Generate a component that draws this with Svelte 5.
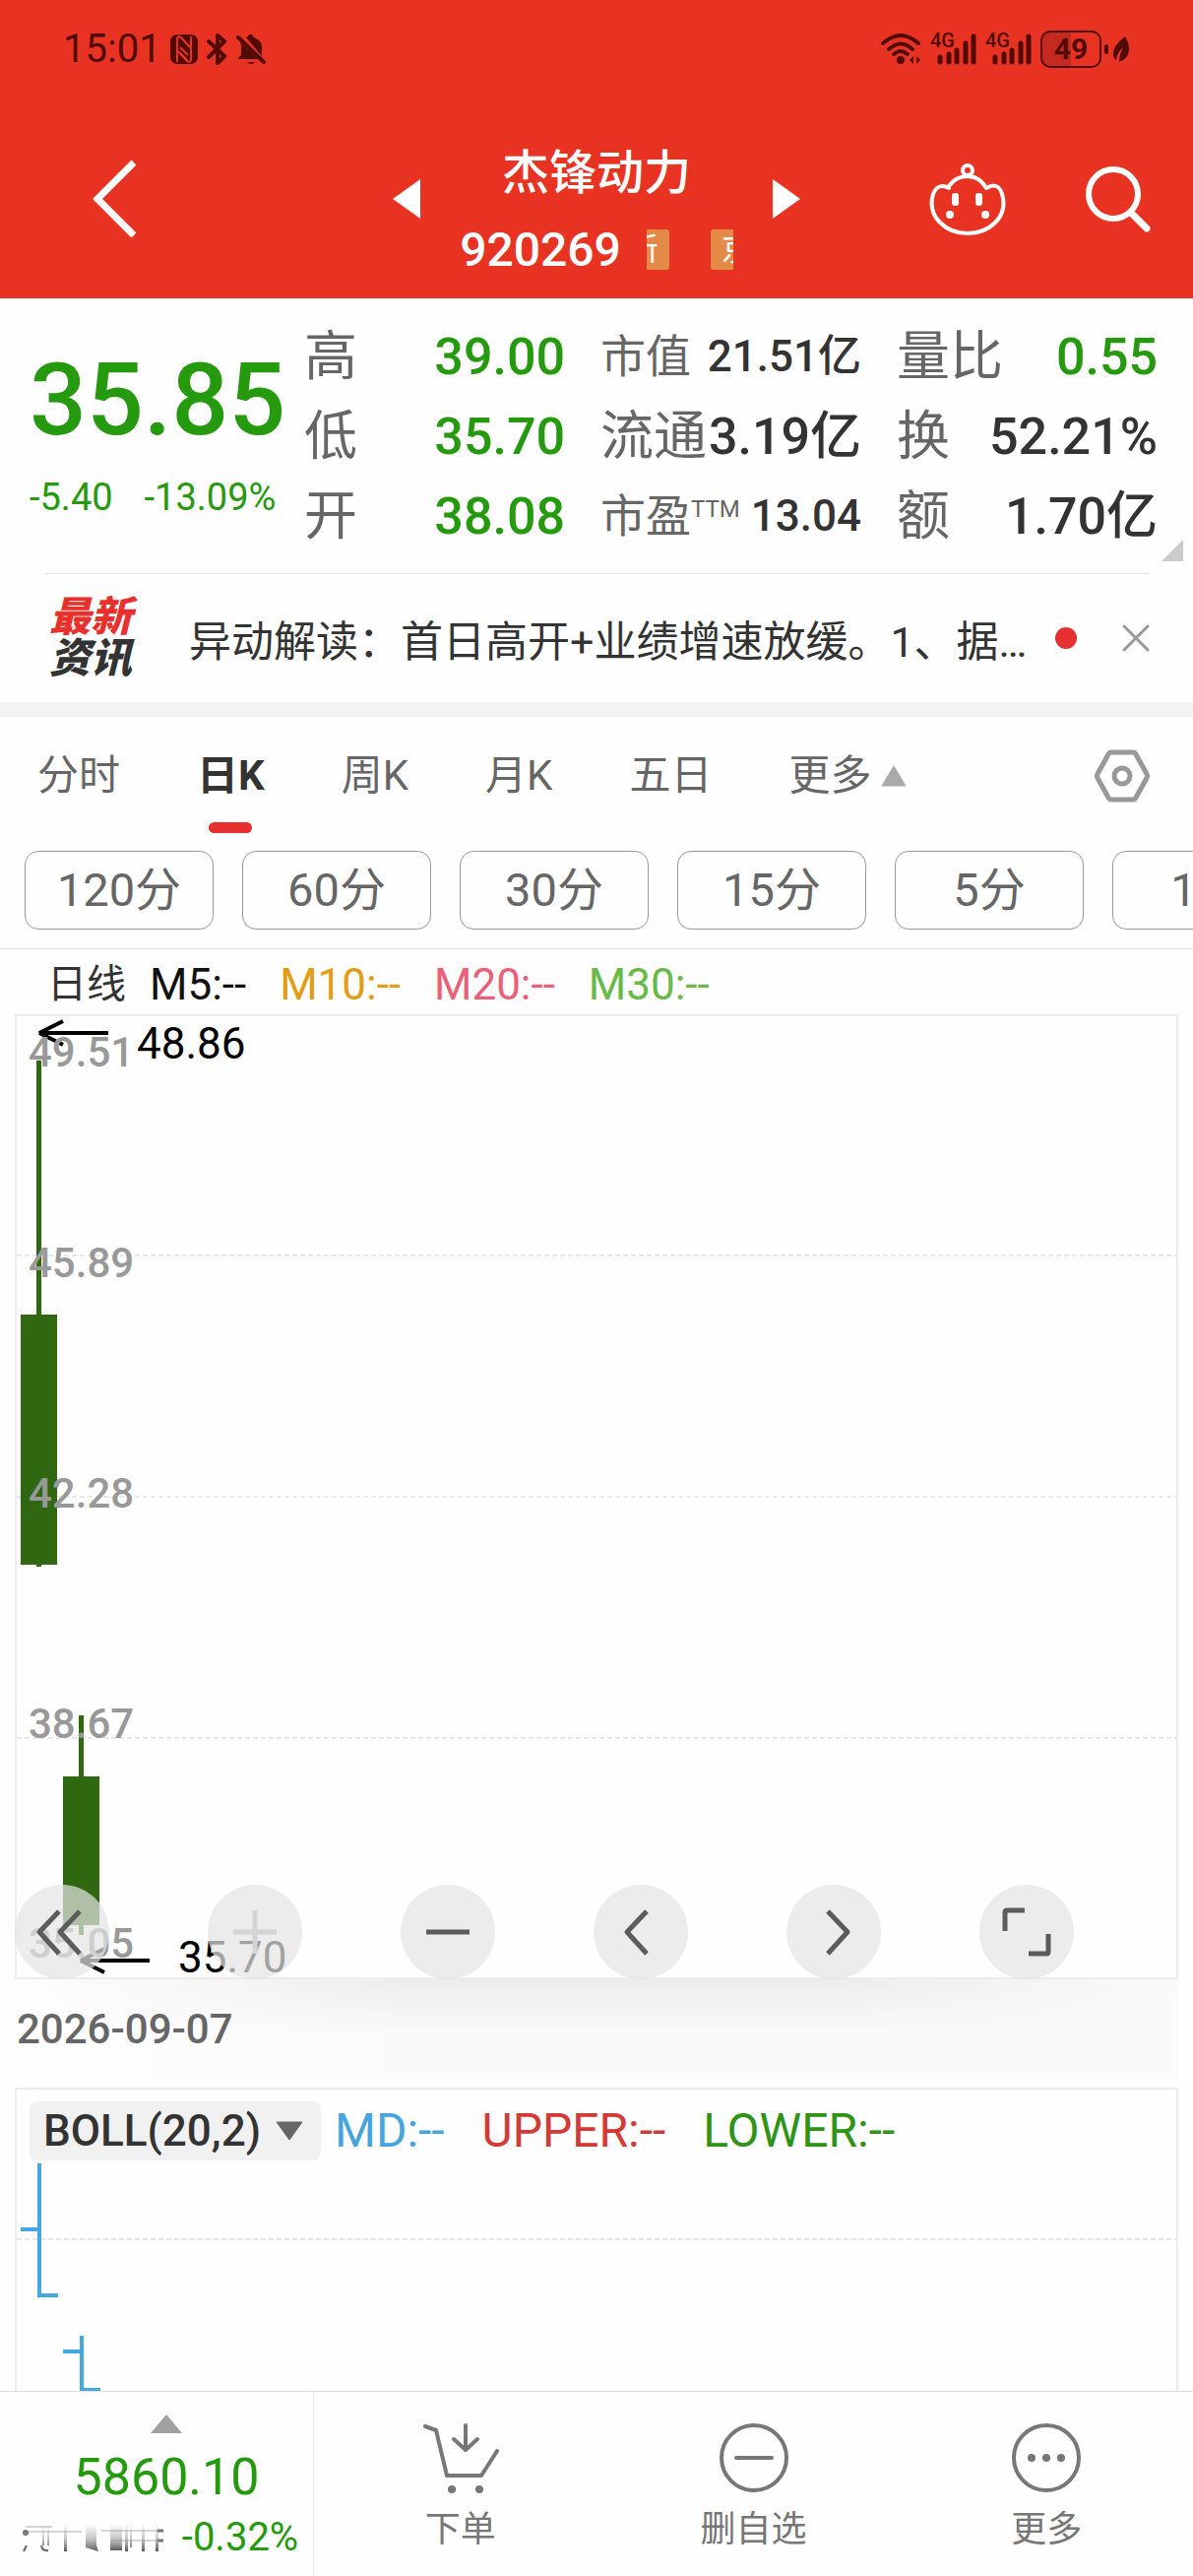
<script lang="ts">
	type Cell = { label: string; sup?: string; value: string; down?: boolean; small?: boolean };

	const columns: Cell[][] = [
		[
			{ label: '高', value: '39.00', down: true },
			{ label: '低', value: '35.70', down: true },
			{ label: '开', value: '38.08', down: true }
		],
		[
			{ label: '市值', value: '21.51亿', small: true },
			{ label: '流通', value: '3.19亿' },
			{ label: '市盈', sup: 'TTM', value: '13.04', small: true }
		],
		[
			{ label: '量比', value: '0.55', down: true },
			{ label: '换', value: '52.21%' },
			{ label: '额', value: '1.70亿' }
		]
	];

	const tabs = ['分时', '日K', '周K', '月K', '五日'];
	const periods = ['120分', '60分', '30分', '15分', '5分', '1分'];
	let active = $state('日K');

	const averages = [
		{ text: 'M5:--', color: '#111' },
		{ text: 'M10:--', color: '#e29d14' },
		{ text: 'M20:--', color: '#ea6079' },
		{ text: 'M30:--', color: '#67ba45' }
	];

	const gridLines = [243, 488, 733];
	const scale = [
		{ text: '49.51', y: 51 },
		{ text: '45.89', y: 265 },
		{ text: '42.28', y: 499 },
		{ text: '38.67', y: 733 },
		{ text: '35.05', y: 956 }
	];
	const candles = [
		{ x: 4, high: 45, open: 303, close: 557, low: 559 },
		{ x: 47, high: 710, open: 772, close: 923, low: 933 }
	];
	const marks = [
		{ text: '48.86', x: 23, y: 17, textX: 122, textY: 43 },
		{ text: '35.70', x: 65, y: 959, textX: 164, textY: 971 }
	];

	const tools = [
		{ name: '最早', d: 'M45 27 25 48 45 70M66 27 46 48 66 70' },
		{ name: '放大', d: 'M48 26V70M26 48H70', off: true },
		{ name: '缩小', d: 'M26 48H70' },
		{ name: '向左', d: 'M54 27 34 48 54 70' },
		{ name: '向右', d: 'M42 27 62 48 42 70' },
		{ name: '全屏', d: 'M26 47V28Q26 26 28 26H46M50 70H68Q70 70 70 68V50' }
	];

	const bolls = [
		{ text: 'MD:--', color: '#46a5dd' },
		{ text: 'UPPER:--', color: '#d33a36' },
		{ text: 'LOWER:--', color: '#2f9416' }
	];
</script>

<div class="screen">
	<header>
		<div class="status">
			<div class="status-left">
				<span class="time">15:01</span>
				<svg width="30" height="32" viewBox="0 0 30 32" aria-hidden="true">
					<rect x="1" y="1" width="28" height="30" rx="7" fill="#520a06" />
					<path d="M8 29V5q1-3 4-1l9 10M22 3v24q-1 3-4 1L9 18" fill="none" stroke="#e83323" stroke-width="2" />
					<path d="M11 14l8 8M11 20l7 7" stroke="#e83323" stroke-width="2" />
				</svg>
				<svg width="22" height="34" viewBox="0 0 22 34" aria-hidden="true">
					<path d="M2 9 18 24 11 31V3L18 9 2 25" fill="none" stroke="#520a06" stroke-width="4" stroke-linejoin="round" stroke-linecap="round" />
				</svg>
				<svg width="30" height="34" viewBox="0 0 30 34" aria-hidden="true">
					<path d="M10 5q2 0 3-3h3q1 3 4 4 6 3 6 9v9ZM4 10 22 27H2q0-2 3-4V13ZM11 30h8q-4 4-8 0Z" fill="#520a06" />
					<path d="M2 5 28 30" stroke="#520a06" stroke-width="4" stroke-linecap="round" />
				</svg>
			</div>
			<div class="status-right">
				<svg width="42" height="34" viewBox="0 0 42 34" aria-hidden="true">
					<g fill="none" stroke="#520a06" stroke-width="4" stroke-linecap="round">
						<path d="M2 11Q20-5 38 11" />
						<path d="M8 17Q20 6 32 17" />
						<path d="M13 22Q20 16 27 22" />
					</g>
					<circle cx="20" cy="28" r="4" fill="#520a06" />
					<path d="M33 24v8l-4-4zM36 24v8l4-4z" fill="#520a06" />
				</svg>
				{#each [1, 2] as sim (sim)}
					<span class="signal">
						<span class="net">4G</span>
						<svg width="48" height="34" viewBox="0 0 48 34" aria-hidden="true">
							<g stroke="#520a06" stroke-width="5" stroke-linecap="round">
								<path d="M10 25V30M19 22V30M27 18V30M36 11V30M44 4V30" />
							</g>
						</svg>
					</span>
				{/each}
				<span class="battery">49</span>
				<span class="cap"></span>
				<svg class="leaf" width="18" height="28" viewBox="0 0 18 28" aria-hidden="true">
					<path d="M13 1Q1 10 1 18q0 6 3 7 1-8 7-13-4 7-4 15 10-4 10-13Q17 8 13 1Z" fill="#520a06" />
				</svg>
			</div>
		</div>

		<nav class="titlebar">
			<button class="icon back" aria-label="返回">
				<svg width="46" height="80" viewBox="0 0 46 80">
					<path d="M42 3 5 40 42 77" fill="none" stroke="#fff" stroke-width="7" />
				</svg>
			</button>
			<div class="switcher">
				<button class="icon" aria-label="上一只">
					<svg width="28" height="40" viewBox="0 0 28 40"><path d="M28 0V40L0 20Z" fill="#fff" /></svg>
				</button>
				<div class="stock">
					<h1>杰锋动力</h1>
					<div class="code">
						<span>920269</span>
						<span class="badges"><i>新</i><i>京</i></span>
					</div>
				</div>
				<button class="icon" aria-label="下一只">
					<svg width="28" height="40" viewBox="0 0 28 40"><path d="M0 0V40L28 20Z" fill="#fff" /></svg>
				</button>
			</div>
			<div class="actions">
				<button class="icon" aria-label="智能助手">
					<svg width="78" height="74" viewBox="0 0 78 74">
						<g fill="none" stroke="#fff" stroke-width="4">
							<circle cx="39" cy="8" r="5" />
							<path d="M20 24Q27 14 39 14T58 26Q70 19 74 32 79 49 67 61 56 72 39 72T11 61Q-1 49 4 32 9 20 20 26Z" stroke-linejoin="round" />
						</g>
						<rect x="23" y="31" width="7" height="13" rx="3" fill="#fff" />
						<rect x="47" y="31" width="7" height="13" rx="3" fill="#fff" />
						<circle cx="21" cy="53" r="4" fill="#fff" />
						<circle cx="57" cy="53" r="4" fill="#fff" />
					</svg>
				</button>
				<button class="icon" aria-label="搜索">
					<svg width="68" height="68" viewBox="0 0 68 68">
						<circle cx="29" cy="29" r="25" fill="none" stroke="#fff" stroke-width="6" />
						<path d="M47 48 63 64" stroke="#fff" stroke-width="7" stroke-linecap="round" />
					</svg>
				</button>
			</div>
		</nav>
	</header>

	<section class="quote">
		<div class="price">
			<strong>35.85</strong>
			<div class="change"><span>-5.40</span><span>-13.09%</span></div>
		</div>
		<div class="stats">
			{#each columns as column}
				<dl>
					{#each column as cell}
						<div class="stat" class:small={cell.small}>
							<dt>{cell.label}{#if cell.sup}<sup>{cell.sup}</sup>{/if}</dt>
							<dd class:down={cell.down}>{cell.value}</dd>
						</div>
					{/each}
				</dl>
			{/each}
		</div>
		<svg class="corner" width="22" height="22" viewBox="0 0 22 22" aria-hidden="true">
			<path d="M22 0V22H0Z" fill="#ccc" />
		</svg>
	</section>

	<section class="news">
		<div class="news-logo"><span>最新</span><span>资讯</span></div>
		<a href="#news">异动解读：首日高开+业绩增速放缓。1、据…</a>
		<span class="dot"></span>
		<button class="icon close" aria-label="关闭">
			<svg width="28" height="28" viewBox="0 0 28 28">
				<path d="M2 2 26 26M26 2 2 26" stroke="#999" stroke-width="3" stroke-linecap="round" />
			</svg>
		</button>
	</section>

	<div class="tabs">
		{#each tabs as tab}
			<button class="tab" class:active={tab === active} onclick={() => (active = tab)}>{tab}</button>
		{/each}
		<button class="tab more">
			更多
			<svg width="26" height="22" viewBox="0 0 26 22" aria-hidden="true"><path d="M13 1 25 21H1Z" fill="#aaa" stroke="#aaa" stroke-linejoin="round" /></svg>
		</button>
		<button class="icon settings" aria-label="设置">
			<svg width="56" height="54" viewBox="0 0 56 54">
				<path d="M17 3H39Q41 3 42 5L53 25Q54 27 53 29L42 49Q41 51 39 51H17Q15 51 14 49L3 29Q2 27 3 25L14 5Q15 3 17 3Z" fill="none" stroke="#999" stroke-width="5" />
				<circle cx="28" cy="27" r="8" fill="none" stroke="#999" stroke-width="5" />
			</svg>
		</button>
	</div>

	<div class="periods">
		{#each periods as period}
			<button>{period}</button>
		{/each}
	</div>

	<div class="legend">
		<span class="kind">日线</span>
		{#each averages as avg}
			<span style:color={avg.color}>{avg.text}</span>
		{/each}
	</div>

	<section class="chart">
		<svg width="100%" height="100%" role="img" aria-label="日K线">
			{#each gridLines as y}
				<line x1="0" x2="100%" y1={y} y2={y} stroke="#e8e8e8" stroke-width="2" stroke-dasharray="5 3" />
			{/each}
			{#each candles as c}
				<rect x={c.x + 16} y={c.high} width="5" height={c.low - c.high} fill="#2f6811" />
				<rect x={c.x} y={c.open} width="37" height={c.close - c.open} fill="#2f6811" />
			{/each}
			{#each marks as m}
				<path d="M{m.x + 70} {m.y}H{m.x}L{m.x + 24} {m.y - 12}M{m.x} {m.y}L{m.x + 24} {m.y + 12}" fill="none" stroke="#000" stroke-width="4" />
				<text class="mark" x={m.textX} y={m.textY}>{m.text}</text>
			{/each}
			{#each scale as s}
				<text class="scale" x="12" y={s.y}>{s.text}</text>
			{/each}
		</svg>
		<div class="tools">
			{#each tools as tool}
				<button class:off={tool.off} aria-label={tool.name}>
					<svg width="96" height="96" viewBox="0 0 96 96">
						<path d={tool.d} fill="none" stroke="currentColor" stroke-width="5" stroke-linejoin="round" />
					</svg>
				</button>
			{/each}
		</div>
	</section>

	<div class="date">2026-09-07</div>

	<section class="boll">
		<svg class="boll-lines" width="100%" height="100%" aria-hidden="true">
			<line x1="0" x2="100%" y1="152" y2="152" stroke="#e8e8e8" stroke-width="2" stroke-dasharray="5 3" />
			<path d="M4 142H23M23 75V209H42M47 266H66M66 250V305H85" fill="none" stroke="#46a8e0" stroke-width="4" />
		</svg>
		<div class="boll-head">
			<label class="picker">
				<select aria-label="指标">
					<option>BOLL(20,2)</option>
				</select>
				<svg width="28" height="20" viewBox="0 0 28 20" aria-hidden="true"><path d="M1 1H27L14 19Z" fill="#666" stroke="#666" stroke-linejoin="round" /></svg>
			</label>
			{#each bolls as b}
				<span style:color={b.color}>{b.text}</span>
			{/each}
		</div>
	</section>

	<footer>
		<button class="index">
			<svg width="32" height="19" viewBox="0 0 32 19" aria-hidden="true"><path d="M16 0 32 19H0Z" fill="#a0a0a0" /></svg>
			<b>5860.10</b>
			<span class="index-row">
				<!-- index name caught halfway through its flip -->
				<svg width="144" height="32" viewBox="0 0 144 32" aria-hidden="true">
					<defs>
						<linearGradient id="fade" x1="0" y1="0" x2="0" y2="1">
							<stop offset="0" stop-color="#999" stop-opacity="0" />
							<stop offset="0.55" stop-color="#888" stop-opacity="0.5" />
							<stop offset="1" stop-color="#555" />
						</linearGradient>
					</defs>
					<path d="M20 2h2v22h-2zM25 2h2v22h-2zM42 2h3v28h-3zM64 2h11v22l2 6-13-4zM89 2h12v26H89zM104 2h3v28h-3zM109 2h2v24h-2zM121 2h3v28h-3zM135 2h3v28h-3z" fill="url(#fade)" />
					<path d="M1 30 4 24M19 24q1 6 7 5M89 28h12" fill="none" stroke="#666" stroke-width="2" />
					<path d="M3 5H30M2 10H60M80 9H142M90 19H142" stroke="#999" stroke-width="2" opacity="0.4" />
					<circle cx="3" cy="11" r="3" fill="#777" />
					<path d="M137 9H143M137 19H143" stroke="#777" stroke-width="3" />
				</svg>
				<span>-0.32%</span>
			</span>
		</button>
		<button class="action">
			<svg width="78" height="72" viewBox="0 0 78 72" aria-hidden="true">
				<path d="M3 4 14 8 25 54H60L76 29M44 3V27M32 17 44 28 56 17" fill="none" stroke="#777" stroke-width="4" stroke-linecap="round" stroke-linejoin="round" />
				<circle cx="30" cy="68" r="4" fill="#777" />
				<circle cx="58" cy="68" r="4" fill="#777" />
			</svg>
			下单
		</button>
		<button class="action">
			<svg width="72" height="72" viewBox="0 0 72 72" aria-hidden="true">
				<circle cx="36" cy="36" r="33" fill="none" stroke="#777" stroke-width="4" />
				<path d="M18 36H54" stroke="#777" stroke-width="4" stroke-linecap="round" />
			</svg>
			删自选
		</button>
		<button class="action">
			<svg width="72" height="72" viewBox="0 0 72 72" aria-hidden="true">
				<circle cx="36" cy="36" r="33" fill="none" stroke="#777" stroke-width="4" />
				<g fill="#777">
					<circle cx="21" cy="36" r="4" />
					<circle cx="36" cy="36" r="4" />
					<circle cx="51" cy="36" r="4" />
				</g>
			</svg>
			更多
		</button>
	</footer>
</div>

<style>
	:global(body) {
		background: #fefefe;
	}
	.screen {
		display: flex;
		flex-direction: column;
		min-height: 100vh;
		overflow: hidden;
		background: #fefefe;
		color: #333;
		font-family: Roboto, 'Noto Sans CJK SC', sans-serif;
	}
	button {
		margin: 0;
		padding: 0;
		border: 0;
		background: none;
		color: inherit;
		font: inherit;
		cursor: pointer;
	}
	svg {
		display: block;
		flex: none;
	}
	.icon {
		display: block;
	}

	header {
		background: #e83323;
		color: #fff;
	}
	.status {
		display: flex;
		justify-content: space-between;
		align-items: center;
		height: 100px;
		padding: 0 64px;
		color: #520a06;
	}
	.status-left,
	.status-right {
		display: flex;
		align-items: center;
	}
	.status-left {
		gap: 8px;
	}
	.time {
		font-size: 40px;
		line-height: 48px;
	}
	.status-right {
		gap: 8px;
	}
	.signal {
		position: relative;
	}
	.net {
		position: absolute;
		top: 0;
		left: 0;
		font-size: 20px;
		font-weight: 500;
		line-height: 16px;
	}
	.battery {
		box-sizing: border-box;
		width: 62px;
		border: 2px solid #520a06;
		border-radius: 10px;
		background: linear-gradient(90deg, #c42a1d 50%, transparent 50%);
		font-size: 30px;
		font-weight: 700;
		line-height: 34px;
		text-align: center;
	}
	.cap {
		width: 4px;
		height: 10px;
		margin-left: -5px;
		border-radius: 2px;
		background: #520a06;
	}
	.leaf {
		margin-left: -4px;
	}

	.titlebar {
		display: grid;
		grid-template-columns: 1fr 414px 1fr;
		align-items: center;
		height: 203px;
	}
	.back {
		justify-self: start;
		padding-left: 94px;
	}
	.switcher {
		display: flex;
		justify-content: space-between;
		align-items: center;
	}
	.stock {
		display: flex;
		flex-direction: column;
		align-items: center;
		padding-top: 26px;
	}
	h1 {
		margin: 0;
		font-size: 48px;
		font-weight: 500;
		line-height: 78px;
	}
	.code {
		display: flex;
		align-items: center;
		gap: 26px;
		font-size: 48px;
		font-weight: 500;
		line-height: 78px;
	}
	.badges {
		display: flex;
		justify-content: center;
		gap: 42px;
		width: 88px;
		overflow: hidden;
	}
	.badges i {
		flex: none;
		padding: 0 11px;
		border-radius: 3px;
		background: #e38b46;
		font-size: 32px;
		font-style: normal;
		font-weight: 400;
		line-height: 41px;
	}
	.actions {
		display: flex;
		justify-content: flex-end;
		align-items: center;
		gap: 80px;
		padding-right: 42px;
	}

	.quote {
		position: relative;
		display: flex;
		padding: 19px 36px 17px 30px;
	}
	.price {
		flex: 0 0 279px;
		color: #259a0f;
	}
	.price strong {
		display: block;
		font-size: 102px;
		font-weight: 500;
		line-height: 168px;
	}
	.change {
		display: flex;
		gap: 32px;
		font-size: 38px;
		line-height: 30px;
	}
	.stats {
		flex: 1;
		display: grid;
		grid-template-columns: repeat(3, 1fr);
		gap: 36px;
	}
	dl,
	dd {
		margin: 0;
	}
	.stat {
		display: flex;
		justify-content: space-between;
		font-size: 54px;
		line-height: 81px;
		white-space: nowrap;
	}
	.stat.small {
		font-size: 46px;
	}
	dt {
		display: flex;
		color: #666;
	}
	sup {
		font-size: 24px;
		line-height: 66px;
	}
	dd {
		font-size: 52px;
		font-weight: 500;
	}
	.small dd {
		font-size: 44px;
	}
	.down {
		color: #259a0f;
	}
	.corner {
		position: absolute;
		right: 10px;
		bottom: 12px;
	}

	.news {
		position: relative;
		display: flex;
		align-items: center;
		height: 131px;
		padding: 0 44px 0 50px;
		border-bottom: 15px solid #f3f3f3;
	}
	.news::before {
		content: '';
		position: absolute;
		top: 0;
		left: 46px;
		right: 44px;
		height: 1px;
		background: #e6e6e6;
	}
	.news-logo {
		display: flex;
		flex-direction: column;
		margin-right: 58px;
		font-size: 42px;
		font-style: italic;
		font-weight: 900;
		line-height: 42px;
	}
	.news-logo span:first-child {
		color: #e8302c;
	}
	.news a {
		flex: 1;
		color: #333;
		font-size: 43px;
		text-decoration: none;
		white-space: nowrap;
	}
	.dot {
		width: 22px;
		height: 22px;
		border-radius: 50%;
		background: #e62f2f;
	}
	.close {
		margin-left: 46px;
	}

	.tabs {
		display: flex;
		gap: 78px;
		padding: 0 44px 0 38px;
	}
	.tab {
		position: relative;
		color: #666;
		font-size: 42px;
		line-height: 120px;
	}
	.tab.active {
		color: #333;
		font-weight: 700;
	}
	.tab.active::after {
		content: '';
		position: absolute;
		bottom: 2px;
		left: calc(50% - 22px);
		width: 44px;
		height: 11px;
		border-radius: 6px;
		background: #e62f2f;
	}
	.more {
		display: flex;
		align-items: center;
		gap: 10px;
	}
	.settings {
		margin-left: auto;
	}

	.periods {
		display: flex;
		gap: 29px;
		padding: 16px 0 19px 25px;
		overflow: hidden;
		border-bottom: 1px solid #e0e0e0;
	}
	.periods button {
		box-sizing: border-box;
		flex: 0 0 192px;
		border: 1px solid #999;
		border-radius: 14px;
		color: #666;
		font-size: 47px;
		line-height: 78px;
	}

	.legend {
		display: flex;
		gap: 34px;
		padding: 6px 0 0 48px;
		font-size: 44px;
		line-height: 60px;
	}
	.kind {
		margin-right: -10px;
		font-size: 40px;
	}

	.chart {
		position: relative;
		box-sizing: border-box;
		height: 980px;
		margin: 0 15px;
		border: 2px solid #ececec;
	}
	.chart text {
		font-size: 44px;
	}
	.chart .scale {
		fill: #999;
		font-size: 42px;
		font-weight: 500;
	}
	.tools {
		position: absolute;
		bottom: -2px;
		left: -2px;
		display: flex;
		gap: 100px;
	}
	.tools button {
		border-radius: 50%;
		background: rgba(228, 228, 228, 0.71);
		color: #5c5c5c;
	}
	.tools .off {
		color: #d4d4d4;
	}

	.date {
		margin: 0 15px 8px;
		padding-left: 2px;
		background:
			linear-gradient(90deg, #fefefe, rgba(254, 254, 254, 0) 35%, rgba(250, 250, 250, 0) 70%, #fafafa),
			linear-gradient(#ececec, #fafafa 55%);
		color: #666;
		font-size: 42px;
		font-weight: 500;
		line-height: 102px;
	}

	.boll {
		position: relative;
		flex: 1;
		min-height: 304px;
		margin: 0 15px;
		overflow: hidden;
		border: solid #ececec;
		border-width: 2px 2px 0;
	}
	.boll-lines {
		position: absolute;
		inset: 0;
	}
	.boll-head {
		position: relative;
		display: flex;
		gap: 38px;
		padding: 12px 13px;
		font-size: 48px;
		line-height: 60px;
	}
	.picker {
		display: flex;
		align-items: center;
		gap: 14px;
		margin-right: -24px;
		padding: 0 18px 0 14px;
		border-radius: 8px;
		background: #f1f1f1;
		font-size: 44px;
	}
	select {
		appearance: none;
		height: 60px;
		padding: 0;
		border: 0;
		background: none;
		color: #333;
		font: inherit;
		font-weight: 500;
	}

	footer {
		display: flex;
		height: 187px;
		border-top: 1px solid #e0e0e0;
		background: #fefefe;
	}
	.index {
		box-sizing: border-box;
		display: flex;
		flex-direction: column;
		align-items: center;
		width: 319px;
		padding: 23px 0 0 20px;
		border-right: 1px solid #eee;
		color: #259a0f;
	}
	.index b {
		font-size: 52px;
		font-weight: 400;
		line-height: 90px;
	}
	.index-row {
		display: flex;
		align-items: center;
		gap: 18px;
		padding-right: 12px;
		font-size: 40px;
		line-height: 30px;
	}
	.action {
		flex: 1;
		display: flex;
		flex-direction: column;
		align-items: center;
		gap: 13px;
		padding-top: 31px;
		color: #777;
		font-size: 36px;
		line-height: 48px;
	}
</style>
